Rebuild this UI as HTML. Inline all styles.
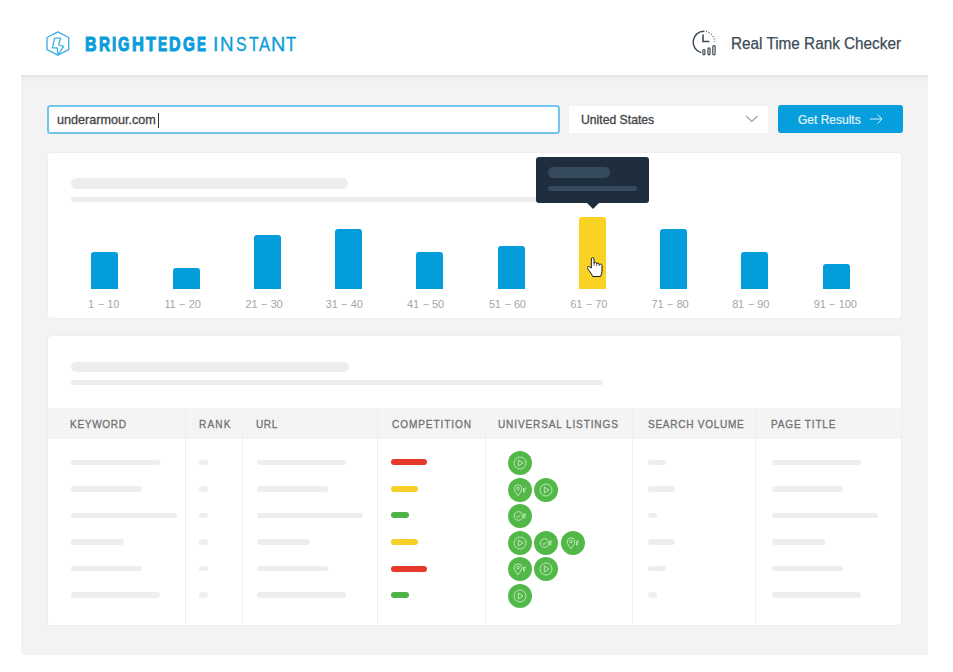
<!DOCTYPE html>
<html><head><meta charset="utf-8">
<style>
*{margin:0;padding:0;box-sizing:border-box}
html,body{width:953px;height:672px;overflow:hidden;background:#fff;font-family:"Liberation Sans",sans-serif}
.a{position:absolute}
.panel{left:21px;top:75px;width:907px;height:580px;background:linear-gradient(#e3e3e3 0,#e8e8e8 1.5px,#efefef 3.5px,#f3f3f3 6px,#f3f3f3 100%)}
.card{background:#fff;border-radius:3px;box-shadow:0 0 1.5px rgba(0,0,0,.10)}
.sk{background:#ededed;border-radius:6px}
.bar{background:#049ddb;border-radius:3px 3px 0 0;width:27px}
.lbl{font-size:11px;color:#a6a6a6;top:298.4px;white-space:nowrap;display:flex}
.lbl i{font-style:normal;display:inline-block;letter-spacing:-0.2px}
.lbl s{text-decoration:none;display:inline-block;position:relative;top:-1.6px;margin:0 3.3px 0 3.8px;transform:scaleX(.85)}
.th{top:407.5px;height:31.5px;background:#f4f4f4}
.ht{font-size:11.2px;color:#707070;-webkit-text-stroke:0.3px #707070;transform:scaleX(0.9);transform-origin:0 0;top:418px;white-space:nowrap}
.dv{width:1px;background:#efefef;top:407.5px;height:217.5px}
.rb{height:5.5px;background:#eeeeee;border-radius:3px}
.cb{height:6px;border-radius:3px}
.gc{width:24px;height:24px;border-radius:50%;background:#52b848}
.gc svg{position:absolute;left:0;top:0}
.logo span{position:absolute;top:32.2px;font-size:20.8px;line-height:23.90px;color:#0b9ddb;transform-origin:0 0;white-space:nowrap}
</style></head><body>
<!-- header -->
<svg class="a" style="left:46px;top:30px" width="24" height="27" viewBox="0 0 24 27">
 <path d="M11.9 1.9 L22.7 7.5 V19.6 L11.9 25.2 L1 19.6 V7.5 Z" fill="none" stroke="#3ab0e3" stroke-width="1.35" stroke-linejoin="round"/>
 <path d="M8.7 8.2 H14.6 L12.7 15 L17.6 16.4 L11.9 25 L11.2 17.9 H6.3 Z" fill="none" stroke="#3ab0e3" stroke-width="1.3" stroke-linejoin="round"/>
</svg>

<div class="logo">
<span style="left:85.05px;font-weight:bold;transform:scaleX(0.768);-webkit-text-stroke:1.10px #0b9ddb">B</span>
<span style="left:98.99px;font-weight:bold;transform:scaleX(0.733);-webkit-text-stroke:1.10px #0b9ddb">R</span>
<span style="left:112.15px;font-weight:bold;transform:scaleX(0.734);-webkit-text-stroke:1.10px #0b9ddb">I</span>
<span style="left:118.20px;font-weight:bold;transform:scaleX(0.709);-webkit-text-stroke:1.10px #0b9ddb">G</span>
<span style="left:132.05px;font-weight:bold;transform:scaleX(0.790);-webkit-text-stroke:1.10px #0b9ddb">H</span>
<span style="left:145.65px;font-weight:bold;transform:scaleX(0.771);-webkit-text-stroke:1.10px #0b9ddb">T</span>
<span style="left:157.85px;font-weight:bold;transform:scaleX(0.661);-webkit-text-stroke:1.10px #0b9ddb">E</span>
<span style="left:168.85px;font-weight:bold;transform:scaleX(0.766);-webkit-text-stroke:1.10px #0b9ddb">D</span>
<span style="left:182.69px;font-weight:bold;transform:scaleX(0.734);-webkit-text-stroke:1.10px #0b9ddb">G</span>
<span style="left:196.88px;font-weight:bold;transform:scaleX(0.647);-webkit-text-stroke:1.10px #0b9ddb">E</span>
<span style="left:212.79px;font-weight:normal;transform:scaleX(0.948);-webkit-text-stroke:0.33px #0b9ddb">I</span>
<span style="left:220.10px;font-weight:normal;transform:scaleX(0.904);-webkit-text-stroke:0.33px #0b9ddb">N</span>
<span style="left:235.68px;font-weight:normal;transform:scaleX(0.761);-webkit-text-stroke:0.33px #0b9ddb">S</span>
<span style="left:248.53px;font-weight:normal;transform:scaleX(0.778);-webkit-text-stroke:0.33px #0b9ddb">T</span>
<span style="left:258.71px;font-weight:normal;transform:scaleX(0.798);-webkit-text-stroke:0.33px #0b9ddb">A</span>
<span style="left:271.00px;font-weight:normal;transform:scaleX(0.953);-webkit-text-stroke:0.33px #0b9ddb">N</span>
<span style="left:286.43px;font-weight:normal;transform:scaleX(0.798);-webkit-text-stroke:0.33px #0b9ddb">T</span>
</div>
<svg class="a" style="left:691px;top:29px" width="27" height="28" viewBox="0 0 27 28">
 <path d="M12.9 2.3 A10.8 10.8 0 0 0 9.7 23.4" fill="none" stroke="#3c4a57" stroke-width="1.5" stroke-linecap="round"/>
 <path d="M15 2.5 A10.8 10.8 0 0 1 23.7 13.1" fill="none" stroke="#3c4a57" stroke-width="1.3" stroke-dasharray="0.9 1.9"/>
 <path d="M12 5.6 V12.5 H18.3" fill="none" stroke="#3c4a57" stroke-width="1.6"/>
 <rect x="11.9" y="20.6" width="2" height="5.2" rx="1" fill="none" stroke="#3c4a57" stroke-width="1.2"/>
 <rect x="17" y="18.8" width="2" height="7" rx="1" fill="none" stroke="#3c4a57" stroke-width="1.2"/>
 <rect x="21.8" y="16.6" width="2.3" height="9.2" rx="1" fill="none" stroke="#3c4a57" stroke-width="1.2"/>
</svg>
<div class="a" style="left:731px;top:34.5px;font-size:16px;line-height:18px;color:#3c4a57;-webkit-text-stroke:0.25px #3c4a57;white-space:nowrap;transform:scaleX(.956);transform-origin:0 0">Real Time Rank Checker</div>

<div class="a panel"></div>

<!-- search row -->
<div class="a" style="left:47px;top:104.6px;width:513px;height:29px;border:2px solid #72c5ea;border-radius:3.5px;background:#fff"></div>
<div class="a" style="left:57px;top:112.6px;font-size:12.6px;line-height:15px;color:#444;-webkit-text-stroke:0.3px #444;white-space:nowrap">underarmour.com</div>
<div class="a" style="left:158px;top:113px;width:1px;height:15px;background:#333"></div>

<div class="a" style="left:569px;top:106px;width:199px;height:26.5px;background:#fff;border-radius:2px"></div>
<div class="a" style="left:581px;top:112.7px;font-size:12.2px;line-height:15px;color:#444;-webkit-text-stroke:0.3px #444;white-space:nowrap">United States</div>
<svg class="a" style="left:745px;top:114px" width="14" height="9" viewBox="0 0 14 9"><path d="M1.1 2 L6.8 7.3 L12.7 2" fill="none" stroke="#ababab" stroke-width="1.3"/></svg>

<div class="a" style="left:778px;top:105px;width:125px;height:28px;background:#069edc;border-radius:3px"></div>
<div class="a" style="left:798px;top:112.8px;font-size:12px;line-height:15px;color:#e2f3fb;-webkit-text-stroke:0.2px #e2f3fb;white-space:nowrap">Get Results</div>
<svg class="a" style="left:869px;top:113.3px" width="15" height="12" viewBox="0 0 15 12"><path d="M1 6 H13 M8.5 1.5 L13 6 L8.5 10.5" fill="none" stroke="#dff1fa" stroke-width="0.95"/></svg>

<!-- chart card -->
<div class="a card" style="left:48px;top:153px;width:853px;height:165px"></div>
<div class="a sk" style="left:71px;top:178.3px;width:277px;height:10.7px"></div>
<div class="a sk" style="left:71px;top:196.8px;width:531px;height:5.3px"></div>

<div class="a bar" style="left:91px;top:252px;height:37px"></div>
<div class="a bar" style="left:172.5px;top:268px;height:21px"></div>
<div class="a bar" style="left:254px;top:234.7px;height:54.3px"></div>
<div class="a bar" style="left:335px;top:228.5px;height:60.5px"></div>
<div class="a bar" style="left:416px;top:252.4px;height:36.6px"></div>
<div class="a bar" style="left:497.5px;top:246.4px;height:42.6px"></div>
<div class="a bar" style="left:579px;top:217.3px;height:71.7px;background:#f8d323"></div>
<div class="a bar" style="left:660px;top:228.8px;height:60.2px"></div>
<div class="a bar" style="left:741px;top:252.4px;height:36.6px"></div>
<div class="a bar" style="left:822.5px;top:264px;height:25px"></div>


<div class="a lbl" style="left:88.1px"><i>1</i><s>–</s><i>10</i></div>
<div class="a lbl" style="left:164.5px"><i>11</i><s>–</s><i>20</i></div>
<div class="a lbl" style="left:245.6px"><i>21</i><s>–</s><i>30</i></div>
<div class="a lbl" style="left:325.8px"><i>31</i><s>–</s><i>40</i></div>
<div class="a lbl" style="left:407.0px"><i>41</i><s>–</s><i>50</i></div>
<div class="a lbl" style="left:488.9px"><i>51</i><s>–</s><i>60</i></div>
<div class="a lbl" style="left:570.3px"><i>61</i><s>–</s><i>70</i></div>
<div class="a lbl" style="left:651.6px"><i>71</i><s>–</s><i>80</i></div>
<div class="a lbl" style="left:732.2px"><i>81</i><s>–</s><i>90</i></div>
<div class="a lbl" style="left:813.8px"><i>91</i><s>–</s><i>100</i></div>
<!-- tooltip -->
<div class="a" style="left:536px;top:157px;width:113px;height:45.5px;background:#1f2e3f;border-radius:3px"></div>
<div class="a" style="left:585.5px;top:202px;width:0;height:0;border-left:7px solid transparent;border-right:7px solid transparent;border-top:7px solid #1f2e3f"></div>
<div class="a" style="left:548px;top:167px;width:62px;height:10.5px;background:#364a5d;border-radius:5px"></div>
<div class="a" style="left:548px;top:185.5px;width:89px;height:5.5px;background:#364a5d;border-radius:3px"></div>

<!-- hand cursor -->
<svg class="a" style="left:587px;top:256.5px" width="17" height="21" viewBox="0 0 17 21">
 <path d="M4.3 11 V2 C4.3 0.2 7 0.2 7 2 V6.5 C7 5 9.6 5 9.6 6.5 V7.2 C9.6 5.8 12.2 5.8 12.2 7.3 V8 C12.2 6.8 15 6.8 15 8.3 V14 C15 16 14.2 17.5 13.6 19.5 H5.6 C5 17.5 3.5 15.5 2 13.5 L0.6 11.3 C-0.2 10 1.2 8.8 2.4 9.8 Z" fill="#fff" stroke="#1a1a1a" stroke-width="1" stroke-linejoin="round"/>
 <path d="M7 6.5 V9 M9.6 7 V9 M12.2 7.6 V9" stroke="#555" stroke-width="0.8"/>
</svg>

<!-- table card -->
<div class="a card" style="left:48px;top:336px;width:853px;height:289px"></div>
<div class="a sk" style="left:70.5px;top:361.5px;width:278px;height:10px"></div>
<div class="a sk" style="left:70.5px;top:379.5px;width:532px;height:5.5px"></div>
<div class="a th" style="left:48px;width:853px"></div>

<div class="a dv" style="left:185px"></div>
<div class="a dv" style="left:241.6px"></div>
<div class="a dv" style="left:377px"></div>
<div class="a dv" style="left:484.6px"></div>
<div class="a dv" style="left:631.6px"></div>
<div class="a dv" style="left:755.4px"></div>

<div class="a ht" style="left:70.21px;letter-spacing:0.739px">KEYWORD</div>
<div class="a ht" style="left:198.71px;letter-spacing:1.251px">RANK</div>
<div class="a ht" style="left:256.45px;letter-spacing:0.645px">URL</div>
<div class="a ht" style="left:391.82px;letter-spacing:0.998px">COMPETITION</div>
<div class="a ht" style="left:498.35px;letter-spacing:0.947px">UNIVERSAL LISTINGS</div>
<div class="a ht" style="left:648.31px;letter-spacing:0.786px">SEARCH VOLUME</div>
<div class="a ht" style="left:770.91px;letter-spacing:0.893px">PAGE TITLE</div>

<div>
<div class="a rb" style="left:71px;top:459.7px;width:88.5px"></div>
<div class="a rb" style="left:199px;top:459.7px;width:9px"></div>
<div class="a rb" style="left:257px;top:459.7px;width:88.5px"></div>
<div class="a cb" style="left:391px;top:459.4px;width:36px;background:#e5392b"></div>
<div class="a rb" style="left:648px;top:459.7px;width:18px"></div>
<div class="a rb" style="left:772px;top:459.7px;width:88.5px"></div>
<div class="a gc" style="left:507.7px;top:450.8px"><svg width="24" height="24" viewBox="0 0 24 24"><circle cx="12" cy="12" r="6" fill="none" stroke="#c9ebc5" stroke-width="0.9"/><path d="M10.3 9 L15 12 L10.3 15 Z" fill="none" stroke="#c9ebc5" stroke-width="0.9" stroke-linejoin="round"/></svg></div>
<div class="a rb" style="left:71px;top:486.1px;width:71px"></div>
<div class="a rb" style="left:199px;top:486.1px;width:9px"></div>
<div class="a rb" style="left:257px;top:486.1px;width:71px"></div>
<div class="a cb" style="left:391px;top:485.8px;width:27px;background:#f6d026"></div>
<div class="a rb" style="left:648px;top:486.1px;width:27px"></div>
<div class="a rb" style="left:772px;top:486.1px;width:71px"></div>
<div class="a gc" style="left:507.7px;top:477.5px"><svg width="24" height="24" viewBox="0 0 24 24"><path d="M10 17.8 C8 15 6.2 12.8 6.2 10.6 A3.8 3.8 0 0 1 13.8 10.6 C13.8 12.8 12 15 10 17.8 Z" fill="none" stroke="#c9ebc5" stroke-width="0.9"/><circle cx="10" cy="10.6" r="1.3" fill="none" stroke="#c9ebc5" stroke-width="0.9"/><path d="M15.6 10.2 H18.1 M15.6 12 H17.6 M15.6 13.8 H17.1 M15.6 10 V14.2" fill="none" stroke="#c9ebc5" stroke-width="0.9"/></svg></div>
<div class="a gc" style="left:534.3px;top:477.5px"><svg width="24" height="24" viewBox="0 0 24 24"><circle cx="12" cy="12" r="6" fill="none" stroke="#c9ebc5" stroke-width="0.9"/><path d="M10.3 9 L15 12 L10.3 15 Z" fill="none" stroke="#c9ebc5" stroke-width="0.9" stroke-linejoin="round"/></svg></div>
<div class="a rb" style="left:71px;top:512.5px;width:106px"></div>
<div class="a rb" style="left:199px;top:512.5px;width:9px"></div>
<div class="a rb" style="left:257px;top:512.5px;width:106px"></div>
<div class="a cb" style="left:391px;top:512.2px;width:18px;background:#4fb246"></div>
<div class="a rb" style="left:648px;top:512.5px;width:9px"></div>
<div class="a rb" style="left:772px;top:512.5px;width:106px"></div>
<div class="a gc" style="left:507.7px;top:503.9px"><svg width="24" height="24" viewBox="0 0 24 24"><circle cx="10.5" cy="12" r="4.3" fill="none" stroke="#c9ebc5" stroke-width="0.9"/><path d="M8.6 12.3 L10 13.6 L12.5 10.8" fill="none" stroke="#c9ebc5" stroke-width="0.9"/><path d="M15.8 10.2 H18.3 M15.8 12 H17.8 M15.8 13.8 H17.3 M15.8 10 V14.2" fill="none" stroke="#c9ebc5" stroke-width="0.9"/></svg></div>
<div class="a rb" style="left:71px;top:539.0px;width:53px"></div>
<div class="a rb" style="left:199px;top:539.0px;width:9px"></div>
<div class="a rb" style="left:257px;top:539.0px;width:53px"></div>
<div class="a cb" style="left:391px;top:538.7px;width:27px;background:#f6d026"></div>
<div class="a rb" style="left:648px;top:539.0px;width:27px"></div>
<div class="a rb" style="left:772px;top:539.0px;width:53px"></div>
<div class="a gc" style="left:507.7px;top:530.6px"><svg width="24" height="24" viewBox="0 0 24 24"><circle cx="12" cy="12" r="6" fill="none" stroke="#c9ebc5" stroke-width="0.9"/><path d="M10.3 9 L15 12 L10.3 15 Z" fill="none" stroke="#c9ebc5" stroke-width="0.9" stroke-linejoin="round"/></svg></div>
<div class="a gc" style="left:534.3px;top:530.6px"><svg width="24" height="24" viewBox="0 0 24 24"><circle cx="10.5" cy="12" r="4.3" fill="none" stroke="#c9ebc5" stroke-width="0.9"/><path d="M8.6 12.3 L10 13.6 L12.5 10.8" fill="none" stroke="#c9ebc5" stroke-width="0.9"/><path d="M15.8 10.2 H18.3 M15.8 12 H17.8 M15.8 13.8 H17.3 M15.8 10 V14.2" fill="none" stroke="#c9ebc5" stroke-width="0.9"/></svg></div>
<div class="a gc" style="left:560.7px;top:530.6px"><svg width="24" height="24" viewBox="0 0 24 24"><path d="M10 17.8 C8 15 6.2 12.8 6.2 10.6 A3.8 3.8 0 0 1 13.8 10.6 C13.8 12.8 12 15 10 17.8 Z" fill="none" stroke="#c9ebc5" stroke-width="0.9"/><circle cx="10" cy="10.6" r="1.3" fill="none" stroke="#c9ebc5" stroke-width="0.9"/><path d="M15.6 10.2 H18.1 M15.6 12 H17.6 M15.6 13.8 H17.1 M15.6 10 V14.2" fill="none" stroke="#c9ebc5" stroke-width="0.9"/></svg></div>
<div class="a rb" style="left:71px;top:565.8px;width:71px"></div>
<div class="a rb" style="left:199px;top:565.8px;width:9px"></div>
<div class="a rb" style="left:257px;top:565.8px;width:71px"></div>
<div class="a cb" style="left:391px;top:565.5px;width:36px;background:#e5392b"></div>
<div class="a rb" style="left:648px;top:565.8px;width:18px"></div>
<div class="a rb" style="left:772px;top:565.8px;width:71px"></div>
<div class="a gc" style="left:507.7px;top:557.0px"><svg width="24" height="24" viewBox="0 0 24 24"><path d="M10 17.8 C8 15 6.2 12.8 6.2 10.6 A3.8 3.8 0 0 1 13.8 10.6 C13.8 12.8 12 15 10 17.8 Z" fill="none" stroke="#c9ebc5" stroke-width="0.9"/><circle cx="10" cy="10.6" r="1.3" fill="none" stroke="#c9ebc5" stroke-width="0.9"/><path d="M15.6 10.2 H18.1 M15.6 12 H17.6 M15.6 13.8 H17.1 M15.6 10 V14.2" fill="none" stroke="#c9ebc5" stroke-width="0.9"/></svg></div>
<div class="a gc" style="left:534.3px;top:557.0px"><svg width="24" height="24" viewBox="0 0 24 24"><circle cx="12" cy="12" r="6" fill="none" stroke="#c9ebc5" stroke-width="0.9"/><path d="M10.3 9 L15 12 L10.3 15 Z" fill="none" stroke="#c9ebc5" stroke-width="0.9" stroke-linejoin="round"/></svg></div>
<div class="a rb" style="left:71px;top:592.2px;width:88.5px"></div>
<div class="a rb" style="left:199px;top:592.2px;width:9px"></div>
<div class="a rb" style="left:257px;top:592.2px;width:88.5px"></div>
<div class="a cb" style="left:391px;top:591.9px;width:18px;background:#4fb246"></div>
<div class="a rb" style="left:648px;top:592.2px;width:9px"></div>
<div class="a rb" style="left:772px;top:592.2px;width:88.5px"></div>
<div class="a gc" style="left:507.7px;top:583.7px"><svg width="24" height="24" viewBox="0 0 24 24"><circle cx="12" cy="12" r="6" fill="none" stroke="#c9ebc5" stroke-width="0.9"/><path d="M10.3 9 L15 12 L10.3 15 Z" fill="none" stroke="#c9ebc5" stroke-width="0.9" stroke-linejoin="round"/></svg></div>
</div>
</body></html>
